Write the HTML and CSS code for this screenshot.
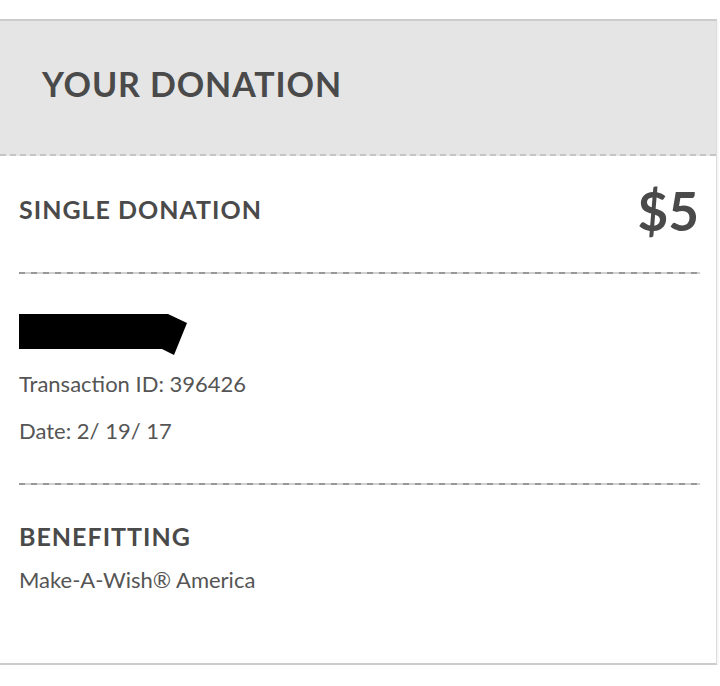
FILE: index.html
```html
<!DOCTYPE html>
<html lang="en">
<head>
    <meta charset="UTF-8">
    <meta name="viewport" content="width=device-width, initial-scale=1.0">
    <title>Your Donation</title>
    <link rel="stylesheet" href="styles.css">
</head>
<body>
    <div class="card">
        <div class="card-header">
            <h1>YOUR DONATION</h1>
        </div>

        <div class="card-body">
            <div class="summary">
                <h2>SINGLE DONATION</h2>
                <span class="amount">$5</span>
            </div>

            <div class="details">
                <!-- redacted name -->
                <svg class="redacted" width="168" height="41" viewBox="0 0 168 41">
                    <polygon points="0,0 149,0 168,9 155,41 143,35 0,35" fill="#000"/>
                </svg>
                <p class="line">Transaction ID: 396426</p>
                <p class="line date">Date: 2/ 19/ 17</p>
            </div>

            <div class="benefit">
                <h2>BENEFITTING</h2>
                <p class="line charity">Make-A-Wish® America</p>
            </div>
        </div>
    </div>
</body>
</html>
```

FILE: styles.css
```css
body {
    font-family: Lato, "Liberation Sans", sans-serif;
    margin: 0;
    background-color: #fff;
    color: #4a4a4a;
}

.card {
    width: 716px;
    margin-top: 19px;
    background-color: #fff;
    border-top: 2px solid #ccc;
    border-bottom: 2px solid #ccc;
    border-right: 1px solid #ddd;
    box-shadow: 1px 1px 2px rgba(0,0,0,0.06);
}

.card-header {
    background-color: #e5e5e5;
    padding: 46px 0 53px 42px;
    border-bottom: 2px dashed #c4c4c4;
}

h1 {
    margin: 0;
    font-size: 34px;
    line-height: 1;
    font-weight: 700;
    letter-spacing: 0.9px;
    color: #4a4a4a;
}

.card-body {
    padding: 0 16px 72px 19px;
}

h2 {
    margin: 0;
    font-size: 25px;
    line-height: 1;
    font-weight: 700;
    letter-spacing: 1px;
    color: #4a4a4a;
}

.summary {
    display: flex;
    justify-content: space-between;
    align-items: center;
    padding: 28px 0 37px;
}

.amount {
    font-size: 53px;
    line-height: 1;
    font-weight: 700;
    margin-right: 1px;
    margin-bottom: -2px;
}

.details,
.benefit {
    background-image: repeating-linear-gradient(to right, #999 0 6px, #d0d0d0 6px 12px);
    background-size: 100% 2px;
    background-repeat: no-repeat;
}

.details {
    padding: 42px 0 41px;
}

.redacted {
    display: block;
    margin-bottom: 18px;
}

.line {
    margin: 0;
    font-size: 22px;
    line-height: 1;
    color: #555;
}

.date {
    margin-top: 25px;
}

.benefit {
    padding-top: 41px;
}

.charity {
    margin-top: 20px;
}
```
